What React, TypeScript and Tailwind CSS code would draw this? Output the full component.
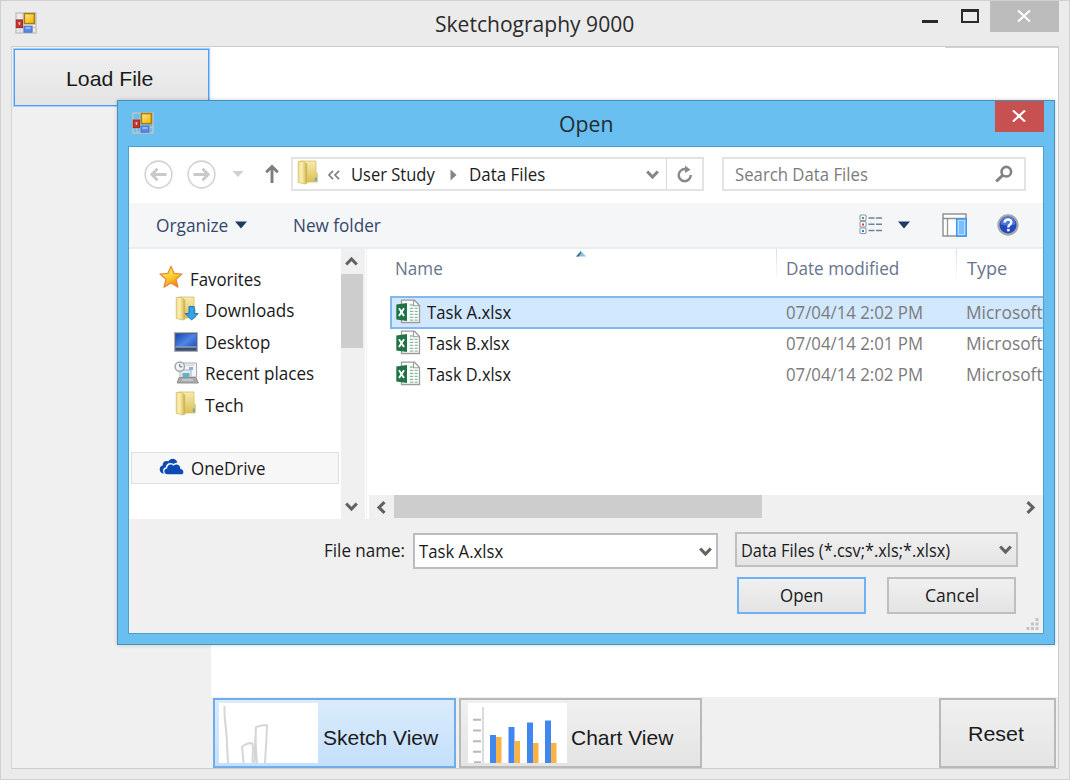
import { useLayoutEffect, useRef, useState, type ReactNode } from 'react';

/** One line of text condensed or widened to fill the width given in its class. */
function Fit({ className, children }: { className: string; children: ReactNode }) {
  const box = useRef<HTMLSpanElement>(null);
  const text = useRef<HTMLSpanElement>(null);
  const [scale, setScale] = useState(1);
  useLayoutEffect(() => {
    if (box.current && text.current && text.current.offsetWidth) {
      setScale(box.current.offsetWidth / text.current.offsetWidth);
    }
  }, []);
  return (
    <span ref={box} className={`block shrink-0 whitespace-nowrap ${className}`}>
      <span ref={text} className="inline-block origin-left" style={{ transform: `scaleX(${scale})` }}>
        {children}
      </span>
    </span>
  );
}

function FormIcon() {
  return (
    <svg width="22" height="22" viewBox="0 0 22 22" className="block">
      <defs>
        <linearGradient id="fy" x1="0" y1="0" x2="1" y2="1">
          <stop offset="0" stopColor="#ffe884" />
          <stop offset="1" stopColor="#f2b200" />
        </linearGradient>
      </defs>
      <rect x="1" y="1" width="20" height="20" fill="none" stroke="#c3c3c3" strokeWidth="1.4" />
      <path d="M1 7.5H8M1 15.5H21M5 16V21M17.5 14V21M8 1V21" stroke="#c6c6c6" fill="none" />
      <rect x="9.4" y="1.6" width="10" height="10" fill="url(#fy)" stroke="#a87e12" strokeWidth="1.5" />
      <rect x="1.3" y="8" width="6.2" height="7.6" fill="#c9372c" stroke="#9c2620" />
      <path d="M4.4 13V10.2M3.4 11h2" stroke="#f6c9c0" fill="none" />
      <rect x="9" y="14.2" width="8" height="6" fill="#5b8ae6" stroke="#4874cc" />
      <rect x="10.5" y="15" width="5" height="2" fill="#95b6f5" />
    </svg>
  );
}

function FolderIcon({ className = '', arrow = false }: { className?: string; arrow?: boolean }) {
  return (
    <svg width="24" height="25" viewBox="0 0 24 25" className={`block shrink-0 ${className}`}>
      <defs>
        <linearGradient id="fl" x1="0" y1="0" x2="1" y2="0">
          <stop offset="0" stopColor="#ecd680" />
          <stop offset="0.35" stopColor="#faf0b8" />
          <stop offset="0.75" stopColor="#e6cf78" />
          <stop offset="1" stopColor="#bf9f3c" />
        </linearGradient>
        <linearGradient id="fb" x1="0" y1="0" x2="0" y2="1">
          <stop offset="0" stopColor="#f7ecae" />
          <stop offset="1" stopColor="#dcbf56" />
        </linearGradient>
      </defs>
      <path d="M3 1h16v12.200h1.300V22H8z" fill="url(#fb)" stroke="#d6bd66" strokeWidth="0.8" />
      <path d="M1.200 1.500h5.600l3 2.400v19.600L7.600 24l-6.400-1.600z" fill="url(#fl)" stroke="#d4bb62" strokeWidth="0.7" />
      {arrow ? (
        <path d="M14 10.6h5.2v7h4L16.6 24l-6.4-6.4H14z" fill="#31a5ef" stroke="#1773bb" strokeWidth="1" />
      ) : (
        <path d="M18.800 17.500v3.500" stroke="#52aade" strokeWidth="1.8" />
      )}
    </svg>
  );
}

function StarIcon() {
  return (
    <svg width="24" height="24" viewBox="0 0 24 24" className="block shrink-0">
      <defs>
        <linearGradient id="st" x1="0.2" y1="0" x2="0.7" y2="1">
          <stop offset="0" stopColor="#ffe27a" />
          <stop offset="0.5" stopColor="#ffd22e" />
          <stop offset="1" stopColor="#ee7a1a" />
        </linearGradient>
      </defs>
      <path d="M12 1.2l3.2 7.2 7.8.6-6 5.2 2 8-7-4.2-7 4.2 2-8-6-5.2 7.8-.6z" fill="url(#st)" stroke="#e28a3c" strokeWidth="1.2" strokeLinejoin="round" />
    </svg>
  );
}

function DesktopIcon() {
  return (
    <svg width="24" height="20" viewBox="0 0 24 20" className="block shrink-0">
      <defs>
        <linearGradient id="dk" x1="0" y1="0" x2="1" y2="0.8">
          <stop offset="0" stopColor="#1c46a8" />
          <stop offset="0.6" stopColor="#4e86e6" />
          <stop offset="1" stopColor="#2a5cc4" />
        </linearGradient>
      </defs>
      <rect x="0.6" y="0.6" width="22.8" height="18.8" fill="#3d4f6e" stroke="#a9b2c0" strokeWidth="1.2" />
      <rect x="1.8" y="2" width="20.4" height="12.6" fill="url(#dk)" />
      <path d="M1.5 15h21" stroke="#b9c4d6" />
    </svg>
  );
}

function RecentIcon() {
  return (
    <svg width="25" height="23" viewBox="0 0 25 23" className="block shrink-0">
      <path d="M7 2h15.5v14H7z" fill="#f2f4f6" stroke="#a8abae" />
      <path d="M6 9h11v7.5H6z" fill="#e5eaed" stroke="#b5b5b5" />
      <path d="M8.500 12h7v4h-7z" fill="#5fb4cd" />
      <path d="M15 6h4v3h-4z" fill="#78b7ee" />
      <path d="M12 4.2h8" stroke="#c9c9c9" />
      <path d="M5 16.5h17l2.3 5.5H3.2z" fill="#a7a9ab" stroke="#8d8f91" />
      <path d="M8 19h11" stroke="#e3e3e3" />
      <circle cx="5.8" cy="5.6" r="4.7" fill="#f1f4f5" stroke="#a0a8ac" strokeWidth="1.5" />
      <path d="M5.8 2.8v3h2.6" stroke="#5c6b75" fill="none" />
    </svg>
  );
}

function OneDriveIcon() {
  return (
    <svg width="25" height="17" viewBox="0 0 25 17" className="block shrink-0">
      <path d="M5 15.4H3.6C-.4 14-.1 8 3.6 7.4 3.5 3.6 7 2.2 9.2 3.5 11.5-.3 17-.1 18.3 4.6c-2 .1-2.5.5-3.6 1.5C10.600 3.500 7 6 6.800 9.200 3.700 9.600 3.300 13.500 5 15.400z" fill="#0d4bb4" />
      <path d="M8.500 16.300C4.300 16.100 4.300 10.700 8.200 10.500 8 6.300 12.700 5.300 14.400 7.800 17.500 4.900 21.800 7 21.200 11c4.200.300 4 5.300.800 5.300z" fill="#0d4bb4" />
    </svg>
  );
}

function ExcelIcon() {
  return (
    <svg width="25" height="25" viewBox="0 0 25 25" className="block shrink-0">
      <path d="M5.500 1.200h13L23.500 6.500v17h-18z" fill="#fff" stroke="#9b9b9b" strokeWidth="1.300" />
      <path d="M17.500 1.200v5.600h6" fill="none" stroke="#9b9b9b" strokeWidth="1.100" />
      <path d="M13.800 6h3M13.800 9.300h3.600M18.700 9.300h3M13.800 12.300h3.600M18.700 12.300h3M13.800 15.300h3.600M18.700 15.300h3M13.800 18.300h3.600M18.700 18.300h3M13.800 21.200h3.600M18.700 21.200h3" stroke="#86bd9c" strokeWidth="1.300" />
      <path d="M.3 5.500L11 4v18L.3 20.500z" fill="#1f7345" />
      <path d="M3 9.300l5 7.600M8 9.300l-5 7.600" stroke="#fff" strokeWidth="1.900" />
    </svg>
  );
}

const chevrons = {
  down: 'M1.200 2.500L6.500 8L11.800 2.500',
  up: 'M1.200 9.500L6.500 4L11.800 9.500',
  left: 'M9.500 1.200L4 6.500L9.500 11.800',
  right: 'M3.500 1.200L9 6.500L3.500 11.800',
};

function Chevron({ dir, color = '#626262' }: { dir: keyof typeof chevrons; color?: string }) {
  return (
    <svg width="13" height="13" viewBox="0 0 13 13" className="block shrink-0">
      <path d={chevrons[dir]} fill="none" stroke={color} strokeWidth="3.100" />
    </svg>
  );
}

function Caret({ color = '#1f3a63' }: { color?: string }) {
  return (
    <svg width="12" height="8" viewBox="0 0 12 8" className="block shrink-0">
      <path d="M0 .5h12L6 7.500z" fill={color} />
    </svg>
  );
}

function Cross() {
  return (
    <svg width="14" height="12" viewBox="0 0 14 12" className="block">
      <path d="M1 0.500L13 11.500M13 0.500L1 11.500" stroke="#fff" strokeWidth="2.100" />
    </svg>
  );
}

function NavCircle({ forward = false }: { forward?: boolean }) {
  return (
    <svg width="29" height="29" viewBox="0 0 29 29" className="block shrink-0">
      <circle cx="14.500" cy="14.500" r="13.400" fill="#fff" stroke="#d3d3d3" strokeWidth="1.600" />
      <path
        d={forward ? 'M6.500 14.500H21M15.500 8.800L21.200 14.500L15.500 20.200' : 'M22.500 14.500H8M13.500 8.800L7.800 14.500L13.500 20.200'}
        fill="none"
        stroke="#c9c9c9"
        strokeWidth="2.900"
      />
    </svg>
  );
}

function AddressRow() {
  return (
    <div className="flex h-[56px] items-start bg-white pl-[15px] pt-[10px]">
      <div className="flex h-[34px] w-[147px] items-center">
        <NavCircle />
        <span className="w-[14px]" />
        <NavCircle forward />
        <span className="w-[16px]" />
        <svg width="12" height="6" viewBox="0 0 12 6" className="block"><path d="M.5 0h11L6 6z" fill="#d0d0d0" /></svg>
        <span className="w-[21px]" />
        <svg width="14" height="20" viewBox="0 0 14 20" className="block">
          <path d="M7 19V3M1.200 8.300L7 2.500l5.800 5.800" fill="none" stroke="#7d7d7d" strokeWidth="2.900" />
        </svg>
      </div>
      <div className="flex h-[34px] w-[413px] border-2 border-[#e3e3e3] bg-white">
        <div className="flex w-[374px] items-center border-r border-[#d9d9d9] pl-[4px]">
          <FolderIcon className="-mt-[3px]" />
          <svg width="14" height="10" viewBox="0 0 14 10" className="ml-[6px] mt-[2px] block">
            <path d="M6 .8L2 5l4 4.200M12 .8L8 5l4 4.200" fill="none" stroke="#808080" strokeWidth="1.700" />
          </svg>
          <Fit className="ml-[10px] w-[84px] text-[18.500px] text-[#1c1c1c]">User Study</Fit>
          <svg width="7" height="12" viewBox="0 0 7 12" className="ml-[15px] mt-[1px] block"><path d="M0.500 0.500L6.500 6L.5 11.500z" fill="#858585" /></svg>
          <Fit className="ml-[12px] w-[76px] text-[18.500px] text-[#1c1c1c]">Data Files</Fit>
          <span className="ml-auto mr-[7px] mt-[2px]"><Chevron dir="down" color="#868686" /></span>
        </div>
        <div className="flex flex-1 items-center justify-center">
          <svg width="17" height="18" viewBox="0 0 17 18" className="block">
            <path d="M10.500 4.400A6 6 0 1 0 14.700 10" fill="none" stroke="#8a8a8a" strokeWidth="2.500" />
            <path d="M9 0.500l5.500 4.200L9 8z" fill="#8a8a8a" />
          </svg>
        </div>
      </div>
      <div className="ml-[18px] flex h-[34px] w-[304px] items-center border-2 border-[#e3e3e3] bg-white pl-[11px] pr-[11px]">
        <Fit className="w-[133px] text-[18.500px] text-[#7c7c7c]">Search Data Files</Fit>
        <svg width="18" height="18" viewBox="0 0 18 18" className="ml-auto block">
          <circle cx="11.300" cy="6.700" r="4.800" fill="none" stroke="#828282" strokeWidth="2.600" />
          <path d="M7.800 10.200L1.200 16.500" stroke="#828282" strokeWidth="3" />
        </svg>
      </div>
    </div>
  );
}

function CommandBar() {
  return (
    <div className="flex h-[46px] items-center border-b-2 border-[#ebeef1] bg-[#f5f6f8] pb-[1px] pl-[27px] pr-[24px] text-[18.500px] text-[#37476b]">
      <Fit className="w-[72px]">Organize</Fit>
      <span className="ml-[7px]"><Caret /></span>
      <Fit className="ml-[46px] w-[88px]">New folder</Fit>
      <svg width="24" height="21" viewBox="0 0 24 21" className="ml-auto block">
        <g fill="#fdfdfd" stroke="#8f9aaa" strokeWidth="1.100">
          <rect x="1" y="1" width="6" height="5.500" rx="1" />
          <rect x="1" y="7.500" width="6" height="5.500" rx="1" />
          <rect x="1" y="14" width="6" height="5.500" rx="1" />
        </g>
        <rect x="3" y="3" width="2" height="2" fill="#4e9b57" />
        <rect x="3" y="9.500" width="2" height="2" fill="#e0382e" />
        <rect x="3" y="16" width="2" height="2" fill="#3c78d8" />
        <path d="M9.500 4h6M17 4h6M9.500 10.300h6M17 10.300h6M9.500 16.600h6M17 16.600h6" stroke="#70809a" strokeWidth="1.500" />
      </svg>
      <span className="ml-[15px]"><Caret /></span>
      <svg width="25" height="24" viewBox="0 0 25 24" className="ml-[32px] block">
        <rect x="1" y="1" width="23" height="22" fill="#fff" stroke="#929292" strokeWidth="1.500" />
        <path d="M1 5.500h23M5.500 5.500V23" stroke="#929292" strokeWidth="1.300" />
        <rect x="14.700" y="6" width="9.500" height="17" fill="#b5dcff" stroke="#3496f5" strokeWidth="1.500" />
        <rect x="17" y="8" width="5" height="13" fill="#7dbdf8" />
      </svg>
      <svg width="22" height="22" viewBox="0 0 22 22" className="ml-[30px] block">
        <circle cx="11" cy="11" r="9.600" fill="#2448be" stroke="#a3a6ab" strokeWidth="2.200" />
        <path d="M3.500 10a7.500 7.500 0 0 1 15 0c-4 2-11 2-15 0z" fill="#4c76dc" />
        <path d="M7.600 8.600c.2-4.200 7-4 6.700-.2-.2 2.300-3 2.400-3 5" fill="none" stroke="#fff" strokeWidth="2.400" />
        <rect x="10.100" y="14.900" width="2.500" height="2.400" fill="#fff" />
      </svg>
    </div>
  );
}

function Sidebar() {
  return (
    <div className="flex w-[212px] flex-col bg-white pt-[14px] text-[18.500px] text-[#1a1a1a]">
      <div className="flex h-[31.500px] items-center pl-[30px]">
        <span className="-mt-[4px]"><StarIcon /></span>
        <Fit className="ml-[7px] w-[71px]">Favorites</Fit>
      </div>
      <div className="flex h-[31.500px] items-center pl-[46px]">
        <span className="-mt-[3px]"><FolderIcon arrow /></span>
        <Fit className="ml-[6px] w-[89px]">Downloads</Fit>
      </div>
      <div className="flex h-[31.500px] items-center pl-[45px]">
        <DesktopIcon />
        <Fit className="ml-[7px] w-[65px]">Desktop</Fit>
      </div>
      <div className="flex h-[31.500px] items-center pl-[45px]">
        <span className="-mt-[2px]"><RecentIcon /></span>
        <Fit className="ml-[6px] w-[109px]">Recent places</Fit>
      </div>
      <div className="flex h-[31.500px] items-center pl-[46px]">
        <span className="-mt-[3px]"><FolderIcon /></span>
        <Fit className="ml-[6px] w-[39px]">Tech</Fit>
      </div>
      <div className="ml-[2px] mt-[31px] flex h-[32px] w-[208px] items-center border border-[#dfdfdf] bg-[#f7f7f7] pl-[27px]">
        <span className="-mt-[2px]"><OneDriveIcon /></span>
        <Fit className="ml-[7px] w-[74px]">OneDrive</Fit>
      </div>
    </div>
  );
}

const files = [
  { name: 'Task A.xlsx', date: '07/04/14 2:02 PM', width: 'w-[84px]' },
  { name: 'Task B.xlsx', date: '07/04/14 2:01 PM', width: 'w-[82px]' },
  { name: 'Task D.xlsx', date: '07/04/14 2:02 PM', width: 'w-[84px]' },
];

function FileList() {
  return (
    <div className="flex min-w-0 flex-1 flex-col overflow-hidden text-[18.500px]">
      <div className="flex h-[47px] items-start text-[#68748c]">
        <div className="flex h-[37px] w-[407px] items-center pl-[26px]">
          <Fit className="w-[48px]">Name</Fit>
          <svg width="12" height="7" viewBox="0 0 12 7" className="mb-[28px] ml-[132px] block"><path d="M1 6.500L6 1l5 5.500z" fill="#8fc1dc" /><path d="M1 6.500L6 1v2L4 6.500z" fill="#3d6c8c" /></svg>
        </div>
        <div className="h-[33px] w-[1px] bg-gradient-to-b from-[#cfe0f3] to-white" />
        <div className="flex h-[37px] w-[179px] items-center pl-[9px]">
          <Fit className="w-[113px]">Date modified</Fit>
        </div>
        <div className="h-[33px] w-[1px] bg-gradient-to-b from-[#cfe0f3] to-white" />
        <div className="flex h-[37px] items-center pl-[10px]">
          <Fit className="w-[40px]">Type</Fit>
        </div>
      </div>
      {files.map((f, i) => (
        <div
          key={f.name}
          className={`ml-[21px] flex shrink-0 items-center pb-[2px] ${
            i === 0 ? 'h-[33px] border-y-2 border-l-2 border-[#85b7ef] bg-[#d1e8ff] pl-[4px]' : 'h-[31.500px] pl-[6px]'
          } ${i === 1 ? '-mt-[1px]' : ''}`}
        >
          <span className="-mt-[1px]"><ExcelIcon /></span>
          <Fit className={`ml-[6px] text-[#161616] ${f.width}`}>{f.name}</Fit>
          <div className="flex flex-1 justify-end text-[#7b7b7b]">
            <Fit className="w-[137px]">{f.date}</Fit>
            <Fit className="ml-[43px] w-[77px]">Microsoft</Fit>
          </div>
        </div>
      ))}
      <div className="mt-auto flex h-[24px] shrink-0 bg-[#f0f0f0]">
        <div className="flex w-[25px] items-center justify-center"><Chevron dir="left" /></div>
        <div className="h-[23px] w-[368px] bg-[#cdcdcd]" />
        <div className="ml-auto flex w-[25px] items-center justify-center"><Chevron dir="right" /></div>
      </div>
    </div>
  );
}

function DialogFooter() {
  return (
    <div className="flex flex-1 flex-col bg-[#f0f0f0] text-[18.500px] text-[#1a1a1a]">
      <div className="flex pl-[195px] pt-[13px]">
        <div className="flex h-[36px] items-center">
          <Fit className="w-[81px]">File name:</Fit>
        </div>
        <div className="ml-[8px] mt-[1px] flex h-[36px] w-[305px] items-center border-2 border-[#babcc2] bg-white pl-[4px] pr-[4px]">
          <Fit className="w-[84px]">Task A.xlsx</Fit>
          <span className="ml-auto mt-[3px]"><Chevron dir="down" /></span>
        </div>
        <div className="ml-[17px] flex h-[35px] w-[283px] items-center border-2 border-[#bfbfbf] bg-gradient-to-b from-[#f0f0f0] to-[#e4e4e4] pl-[4px] pr-[4px]">
          <Fit className="w-[209px]">Data Files (*.csv;*.xls;*.xlsx)</Fit>
          <span className="ml-auto mt-[2px]"><Chevron dir="down" /></span>
        </div>
      </div>
      <div className="mt-[8px] flex pl-[608px]">
        <div className="flex h-[37px] w-[129px] items-center justify-center border-2 border-[#6db1f8] bg-gradient-to-b from-[#f0f0f0] to-[#e4e4e4] pb-[2px] pr-[1px]">
          <Fit className="w-[43px]">Open</Fit>
        </div>
        <div className="ml-[21px] flex h-[37px] w-[129px] items-center justify-center border-2 border-[#bfbfbf] bg-gradient-to-b from-[#f0f0f0] to-[#e4e4e4] pb-[2px]">
          <Fit className="w-[54px]">Cancel</Fit>
        </div>
      </div>
      <svg width="13" height="13" viewBox="0 0 13 13" className="ml-[897px] mt-[4px] block">
        <path d="M9.500 0h3v3h-3zM5 4.500h3v3H5zM9.500 4.500h3v3h-3zM.5 9h3v3h-3zM5 9h3v3H5zM9.500 9h3v3h-3z" fill="#c3c3c3" />
      </svg>
    </div>
  );
}

function OpenDialog() {
  return (
    <div className="absolute left-[116px] top-[99px] flex h-[545px] w-[938px] flex-col border border-[#4591b9] bg-[#68bff0] px-[10px] pb-[10px] shadow-[0_0_4px_rgba(0,0,0,0.2)]">
      <div className="flex h-[45px] items-start">
        <div className="w-[431px] pl-[4px] pt-[11px]"><FormIcon /></div>
        <Fit className="mt-[6px] w-[54px] text-[22px] leading-[33px] text-[#232b30]">Open</Fit>
        <div className="ml-auto flex h-[31px] w-[49px] items-center justify-center bg-[#c75050] pb-[1px] pr-[1px]"><Cross /></div>
      </div>
      <div className="flex h-[488px] flex-col border border-[#4da0cc] bg-white">
        <AddressRow />
        <CommandBar />
        <div className="flex h-[270px] bg-white">
          <Sidebar />
          <div className="flex w-[24px] flex-col bg-[#f0f0f0]">
            <div className="flex h-[25px] items-center pl-[4px]"><Chevron dir="up" /></div>
            <div className="h-[74px] w-[22px] bg-[#cdcdcd]" />
            <div className="mt-auto flex h-[24px] items-center pl-[4px]"><Chevron dir="down" /></div>
          </div>
          <div className="mr-[2px] w-[2px] border-r border-[#f1f1f1]" />
          <FileList />
        </div>
        <DialogFooter />
      </div>
    </div>
  );
}

function SketchThumb() {
  return (
    <svg width="99" height="60" viewBox="0 0 99 60" className="block shrink-0 bg-white">
      <g fill="none" stroke="#d6d6d6" strokeWidth="2" strokeLinejoin="round">
        <path d="M5.500 3C5 17 8 28 8 42l1 18" />
        <path d="M24.500 60C24 53 23.500 47 23 44c2-2 6-4 10-4l1 4-.5 16" />
        <path d="M38 60c-1-11-2-23-1-36 3-1 7-2 11-2l-.5 12L46 60M35.500 60c1-9 0-18 1-27" />
      </g>
    </svg>
  );
}

function ChartThumb() {
  const bars = [
    [22, 32, 34],
    [40.500, 24, 38],
    [59, 19.500, 40],
    [77, 17.500, 40],
  ];
  return (
    <svg width="99" height="60" viewBox="0 0 99 60" className="block shrink-0 bg-white">
      <path d="M15 4v56" stroke="#dcdcdc" strokeWidth="2" />
      <path d="M5 16.700h8M5 27.500h8M5 38.200h8M5 48.800h8M6 59.300h7" stroke="#b9b9b9" strokeWidth="2" />
      {bars.map(([x, blue, orange]) => (
        <g key={x}>
          <rect x={x} y={blue} width="6" height={60 - blue} fill="#4088f0" />
          <rect x={x + 6} y={orange} width="5.500" height={60 - orange} fill="#fab243" />
        </g>
      ))}
    </svg>
  );
}

export default function App() {
  return (
    <div className="relative flex h-[780px] w-[1070px] flex-col overflow-hidden border border-[#d0d0d0] bg-[#ebebeb] font-['Open_Sans','Noto_Sans',sans-serif]">
      <div className="flex h-[45px] shrink-0 items-start">
        <div className="w-[434px] pl-[14px] pt-[11px]"><FormIcon /></div>
        <Fit className="mt-[6px] w-[199px] text-[22px] leading-[32px] text-[#2b2b2b]">Sketchography 9000</Fit>
        <div className="ml-auto flex h-[31px] items-start">
          <div className="mr-[23px] mt-[19px] h-[3px] w-[16px] bg-[#2a2a2a]" />
          <div className="mr-[11px] mt-[8px] h-[14px] w-[18px] border-2 border-t-[3px] border-[#2a2a2a]" />
          <div className="mr-[10px] flex h-[31px] w-[69px] items-center justify-center bg-[#bcbcbc] pb-[1px] pr-[1px]"><Cross /></div>
        </div>
      </div>

      <div className="ml-[10px] flex h-[723px] w-[1048px] border border-[#cccccc] border-l-[#d3d3d3] bg-white">
        <div className="w-[199px] bg-[#f0f0f0] pl-[1px] pt-[1px]">
          <div className="flex h-[59px] w-[197px] items-center justify-center border border-[#a8cef6] bg-gradient-to-b from-[#f0f0f0] to-[#e4e4e4] pt-[3px] pr-[4px] font-['Liberation_Sans',Arial,sans-serif] text-[21px] text-[#1a1a1a] shadow-[inset_0_0_0_1px_#4b9ffc]">
            <Fit className="w-[87px]">Load File</Fit>
          </div>
        </div>
        <div className="flex flex-1 flex-col">
          <div className="ml-auto h-[1px] w-[113px] bg-[#cfcfcf]" />
          <div className="flex-1 bg-white" />
          <div className="flex h-[71px] bg-[#f0f0f0] pl-[2px] pt-[1px] font-['Liberation_Sans',Arial,sans-serif] text-[21px] text-[#1a1a1a]">
            <div className="flex h-[70px] w-[243px] items-center border-2 border-[#72adeb] bg-gradient-to-b from-[#daebfc] to-[#c4e0fc] pl-[4px]">
              <SketchThumb />
              <Fit className="ml-[5px] mt-[9px] w-[115px]">Sketch View</Fit>
            </div>
            <div className="ml-[3px] flex h-[70px] w-[243px] items-center border-2 border-[#b9b9b9] bg-gradient-to-b from-[#f0f0f0] to-[#e4e4e4] pl-[7px]">
              <ChartThumb />
              <Fit className="ml-[4px] mt-[9px] w-[102px]">Chart View</Fit>
            </div>
            <div className="ml-auto mr-[2px] flex h-[70px] w-[117px] items-center justify-center border-2 border-[#b9b9b9] bg-gradient-to-b from-[#f0f0f0] to-[#e4e4e4] pr-[3px] pt-[1px]">
              <Fit className="w-[56px]">Reset</Fit>
            </div>
          </div>
        </div>
      </div>

      <OpenDialog />
    </div>
  );
}
